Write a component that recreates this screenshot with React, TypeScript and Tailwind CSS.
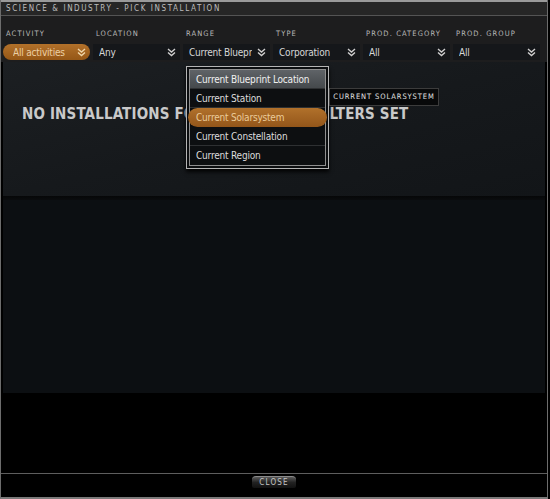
import type { ReactNode } from 'react'

const narrow = 'font-["Liberation_Sans_Narrow","DejaVu_Sans_Condensed",sans-serif]'

function Chevrons({ color = '#cfcfcf' }: { color?: string }) {
  return (
    <svg width="9" height="9" viewBox="0 0 9 9" fill="none" stroke={color} strokeWidth="1.4" className="shrink-0">
      <polyline points="1,1 4.5,4 8,1" />
      <polyline points="1,4.5 4.5,7.5 8,4.5" />
    </svg>
  )
}

function Field({ label, children }: { label: string; children: ReactNode }) {
  return (
    <div className="flex flex-col">
      <div className="h-[11px] pl-[3px] text-[7.5px] leading-[11px] tracking-[1.1px] text-[#b9b9b9]">
        {label}
      </div>
      <div className="mt-[5px]">{children}</div>
    </div>
  )
}

function Select({ value, active }: { value: string; active?: boolean }) {
  return (
    <div
      className={`flex h-[16px] items-center justify-between gap-[2px] pr-[4px] text-[10px] tracking-[-0.2px] ${
        active
          ? 'rounded-full bg-gradient-to-b from-[#b2712a] to-[#955716] pl-[10px] text-[#ecd0a4]'
          : 'bg-[#15171a] pl-[6px] text-[#d6d6d6]'
      }`}
    >
      <span className="overflow-hidden whitespace-nowrap">{value}</span>
      <Chevrons color={active ? '#f0d6aa' : '#cfcfcf'} />
    </div>
  )
}

const ranges = [
  'Current Blueprint Location',
  'Current Station',
  'Current Solarsystem',
  'Current Constellation',
  'Current Region',
]

export default function App() {
  return (
    <div className={`relative h-[499px] w-[550px] overflow-hidden bg-black ${narrow}`}>
      <div className="flex h-[499px] w-[548px] flex-col border-x border-b-2 border-[#6d6d6d] border-b-[#7a7a7a]">
        {/* title bar */}
        <div className="flex h-[16px] shrink-0 items-center border-t-2 border-b border-t-[#9a9a9a] border-b-[#545454] bg-[#262626] pl-[5px]">
          <span className="text-[8px] leading-none tracking-[1.6px] text-[#bdbdbd]">
            SCIENCE &amp; INDUSTRY - PICK INSTALLATION
          </span>
        </div>

        {/* filters */}
        <div className="h-[46px] shrink-0 bg-[#1d1d1e] pl-[2px] pt-[12px]">
          <div className="grid grid-cols-[87px_87px_87px_87px_87px_87px] gap-x-[3px]">
            <Field label="ACTIVITY">
              <Select value="All activities" active />
            </Field>
            <Field label="LOCATION">
              <Select value="Any" />
            </Field>
            <Field label="RANGE">
              <Select value="Current Bluepr" />
            </Field>
            <Field label="TYPE">
              <Select value="Corporation" />
            </Field>
            <Field label="PROD. CATEGORY">
              <Select value="All" />
            </Field>
            <Field label="PROD. GROUP">
              <Select value="All" />
            </Field>
          </div>
        </div>

        {/* results */}
        <div className="mx-[2px] h-[134px] shrink-0 bg-gradient-to-br from-[#1c1f22] via-[#16191c] to-[#121518] pl-[19px] pt-[43px]">
          <div className="whitespace-nowrap text-[15px] font-bold leading-[18px] tracking-[0.15px] text-[#c9c9c9]">
            NO INSTALLATIONS FOUND WITH THE FILTERS SET
          </div>
        </div>
        <div className="mx-[2px] h-[4px] shrink-0 bg-gradient-to-b from-[#060708] to-[#0a0c0e]" />
        <div className="mx-[2px] h-[193px] shrink-0 bg-[#0c0f12]" />
        <div className="h-[80px] shrink-0 bg-black" />

        {/* footer */}
        <div className="flex flex-1 items-start justify-center border-t border-[#5e5e5e] bg-black pt-[2px]">
          <button className="h-[12px] w-[44px] rounded-t-[4px] rounded-b-[2px] border-t border-[#8a8a8a] bg-gradient-to-b from-[#5a5a5a] via-[#222] to-[#111] text-[8px] leading-[11px] tracking-[1.2px] text-[#c4c4c4]">
            CLOSE
          </button>
        </div>
      </div>

      {/* range dropdown */}
      <div className="absolute left-[186px] top-[66px] w-[143px] border border-[#b5b5b5] bg-[#0b0d0f] p-[2px] shadow-[0_3px_4px_rgba(0,0,0,0.9)]">
        <div className="border border-[#8f8f8f]">
          {ranges.map((r, i) => (
            <div
              key={r}
              className={`flex h-[19px] items-center pl-[6px] text-[10px] tracking-[-0.2px] ${
                i === 0
                  ? 'bg-gradient-to-b from-[#5f6367] to-[#45494c] text-[#f0f0f0]'
                  : i === 2
                    ? '-mx-[2px] rounded-full bg-gradient-to-b from-[#b1712b] to-[#93561a] pl-[8px] text-[#ebcc9a]'
                    : 'bg-[#0d0f11] text-[#dcdcdc]'
              } ${i < ranges.length - 1 && i !== 2 ? 'border-b border-[#2e3032]' : ''}`}
            >
              {r}
            </div>
          ))}
        </div>
      </div>

      {/* tooltip */}
      <div className="absolute left-[329px] top-[88px] flex h-[18px] w-[110px] items-center justify-center border border-[#3c3c3c] bg-[#08090a] text-[7.5px] tracking-[0.9px] text-[#e2e2e2]">
        CURRENT SOLARSYSTEM
      </div>
    </div>
  )
}
